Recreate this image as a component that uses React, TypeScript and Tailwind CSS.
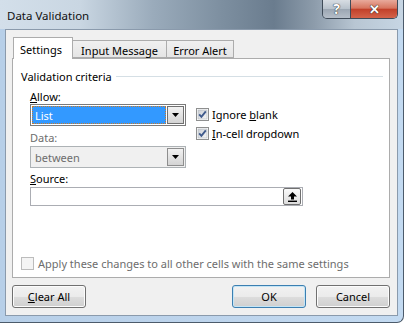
import type { ReactNode } from "react";

const font = "font-['Noto_Sans',sans-serif]";

function Check({ checked, disabled }: { checked?: boolean; disabled?: boolean }) {
  return (
    <svg width="13" height="13" viewBox="0 0 13 13" className="shrink-0">
      <defs>
        <linearGradient id="cbIn" x1="0" y1="0" x2="1" y2="1">
          <stop offset="0" stopColor="#cbcfd5" />
          <stop offset="1" stopColor="#f6f6f6" />
        </linearGradient>
      </defs>
      <rect x="0.5" y="0.5" width="12" height="12" fill={disabled ? "#f4f4f4" : "#fff"} stroke={disabled ? "#bcbcbc" : "#8e8f8f"} />
      {!disabled && <rect x="2" y="2" width="9" height="9" fill="url(#cbIn)" stroke="#b0b5bc" strokeWidth="0.6" />}
      {checked && <path d="M3.2 6.4 L5.4 8.8 L9.8 3.4" fill="none" stroke="#3f5a8c" strokeWidth="1.9" />}
    </svg>
  );
}

function Arrow() {
  return (
    <svg width="7" height="4" viewBox="0 0 7 4">
      <path d="M0 0 H7 L3.5 4 Z" fill="#000" />
    </svg>
  );
}

function Combo({ value, selected, disabled }: { value: string; selected?: boolean; disabled?: boolean }) {
  return (
    <div className={`flex h-[22px] w-[156px] items-stretch border p-px ${disabled ? "border-[#adb2b5] bg-[#f0f0f0]" : "border-[#7a7a7a] bg-white"}`}>
      <div className="flex flex-1 items-center pr-px">
        {selected ? (
          <div className="flex h-full w-full items-center border border-dotted border-[#c77a2a] bg-[#3399ff] pl-[2px] text-white">{value}</div>
        ) : (
          <span className="pl-[3px] text-[#6d6d6d]">{value}</span>
        )}
      </div>
      <div className={`flex w-[17px] items-center justify-center border bg-gradient-to-b from-[#f2f2f2] to-[#d4d4d4] ${disabled ? "border-[#8e8e8e]" : "border-[#707070]"}`}>
        <Arrow />
      </div>
    </div>
  );
}

function WinButton({ children, primary }: { children: ReactNode; primary?: boolean }) {
  return (
    <div className={`flex h-[23px] w-[74px] items-center justify-center rounded-[3px] border ${primary ? "border-[#3c7fb1] shadow-[inset_0_0_0_1px_#c4e5f6]" : "border-[#707070] shadow-[inset_0_0_0_1px_#fcfcfc]"} bg-[linear-gradient(#f2f2f2_0%,#ebebeb_50%,#dddddd_51%,#cfcfcf_100%)] text-black`}>
      {children}
    </div>
  );
}

export default function App() {
  return (
    <div className={`h-[326px] w-[407px] overflow-hidden bg-white text-[11px] leading-[15px] text-black ${font}`}>
      <div className="flex h-[323px] w-[404px] flex-col overflow-hidden rounded-br-[7px] border-b border-r border-[#4c5b6b] bg-[linear-gradient(90deg,#b7cfe8_0%,#bdd4ec_50%,#c3daf1_100%)]">
        {/* title bar */}
        <div className="flex h-[29px] shrink-0 items-start bg-[linear-gradient(90deg,#d3dfea_0%,#c9d6e2_20%,#9aabbb_38%,#7d8fa0_55%,#6a7c8e_68%,#8d9cab_78%,#b8c6d3_88%,#c7d6e4_100%)]">
          <span className="pl-[7px] pt-[8px] text-[11.5px] leading-[16px] text-[#101010]">Data Validation</span>
          <div className="ml-auto mr-[5px] flex h-[19px] overflow-hidden rounded-b-[5px] border border-t-0 border-[#3f4b58]">
            <div className="flex w-[28px] items-center justify-center border-r border-[#3f4b58] bg-[linear-gradient(#d7dde3_0%,#b7c1cb_50%,#9ba6b2_51%,#b5bec8_100%)] text-[14px] font-bold leading-none text-white [text-shadow:0_0_1px_#222,0_0_1px_#222]">?</div>
            <div className="flex w-[46px] items-center justify-center bg-[linear-gradient(#e8aa9b_0%,#d7755f_45%,#c2412a_52%,#d4634a_100%)] text-[13px] font-bold leading-none text-white [text-shadow:0_0_1px_#222,0_0_1px_#222]">✕</div>
          </div>
        </div>
        {/* body */}
        <div className="flex flex-1 pl-[5px] pr-[5px] pb-[6px]">
          <div className="flex w-[393px] flex-col border border-[#8a9aac] bg-[#f0f0f0] pl-[6px] pr-[7px] pt-[7px] pb-[7px]">
            {/* tabs */}
            <div className="relative z-10 -mb-px flex h-[22px] items-end pl-px">
              <div className="flex h-[22px] w-[60px] items-start justify-center border border-b-0 border-[#acacac] bg-white pt-[4px] pr-[4px]">Settings</div>
              <div className="mb-px flex h-[18px] w-[94px] items-start justify-center border border-l-0 border-[#acacac] bg-[linear-gradient(#f0f0f0,#e5e5e5)] pt-[2px]">Input Message</div>
              <div className="mb-px flex h-[18px] w-[67px] items-start justify-center border border-l-0 border-[#acacac] bg-[linear-gradient(#f0f0f0,#e5e5e5)] pt-[2px]">Error Alert</div>
            </div>
            {/* panel */}
            <div className="flex h-[220px] w-[378px] flex-col border border-[#acacac] bg-white pl-[8px] pt-[9px] pb-[6px]">
              <div className="flex h-[16px] items-center pr-[6px]">
                <span>Validation criteria</span>
                <div className="ml-[4px] h-px flex-1 bg-[#d5dfe5]" />
              </div>
              <div className="mt-[5px] flex pl-[9px]">
                <div className="flex w-[156px] flex-col">
                  <span><span className="underline">A</span>llow:</span>
                  <Combo value="List" selected />
                  <span className="mt-[4px] text-[#6d6d6d]">Data:</span>
                  <div className="mt-px"><Combo value="between" disabled /></div>
                  <span className="mt-[3px]"><span className="underline">S</span>ource:</span>
                  <div className="mt-px flex h-[19px] w-[273px] items-center justify-end border border-[#abadb3] bg-white pr-px">
                    <div className="flex h-[17px] w-[18px] items-center justify-center rounded-[2px] border border-[#707070] bg-gradient-to-b from-[#fafafa] to-[#dcdcdc]">
                      <svg width="9" height="10" viewBox="0 0 9 10">
                        <path d="M4.5 0 L9 4.5 H6 V7.5 H3 V4.5 H0 Z" fill="#000" />
                        <rect x="0" y="8.6" width="9" height="1.4" fill="#000" />
                      </svg>
                    </div>
                  </div>
                </div>
                <div className="ml-[10px] mt-[18px] flex flex-col gap-[4px]">
                  <div className="flex items-center gap-[3px]">
                    <Check checked />
                    <span>Ignore <span className="underline">b</span>lank</span>
                  </div>
                  <div className="flex items-center gap-[3px]">
                    <Check checked />
                    <span><span className="underline">I</span>n-cell dropdown</span>
                  </div>
                </div>
              </div>
              <div className="mt-auto flex items-center gap-[4px]">
                <Check disabled />
                <span className="text-[#6d6d6d]">Apply these changes to all other cells with the same settings</span>
              </div>
            </div>
            {/* buttons */}
            <div className="mt-auto flex">
              <WinButton><span><span className="underline">C</span>lear All</span></WinButton>
              <div className="ml-auto flex gap-[10px]">
                <WinButton primary>OK</WinButton>
                <WinButton>Cancel</WinButton>
              </div>
            </div>
          </div>
        </div>
      </div>
    </div>
  );
}
